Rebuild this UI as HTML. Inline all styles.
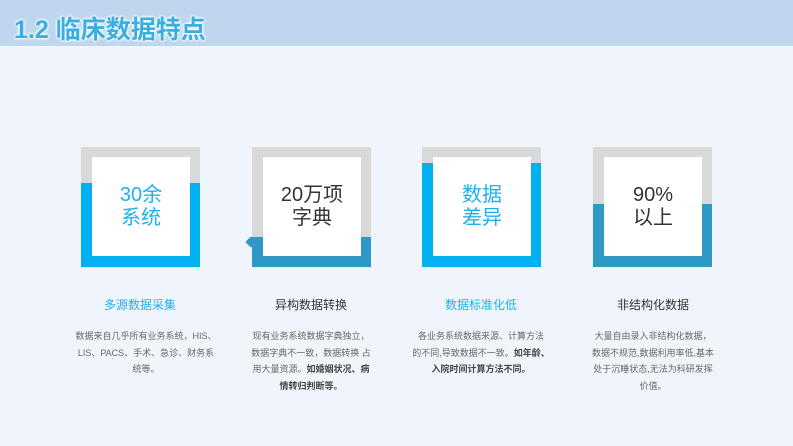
<!DOCTYPE html>
<html><head><meta charset="utf-8"><style>
*{margin:0;padding:0;box-sizing:border-box}
body{width:793px;height:446px;background:#f0f5fc;font-family:"Liberation Sans","Noto Sans CJK SC",sans-serif;position:relative;overflow:hidden}
.hdr{position:absolute;left:0;top:0;width:793px;height:46px;background:#bed7ee}
.ttl{position:absolute;left:14px;top:10px;font-size:25px;font-weight:bold;color:#3aaee0;letter-spacing:0px;text-shadow:0 0 3px #fff,0 0 3px #fff,0 0 2px #fff}
.card{position:absolute;top:147px;width:119px;height:120px;background:#d9d9d9;overflow:hidden}
.card .b{position:absolute;left:0;right:0;bottom:0}
.card .w{position:absolute;left:11px;top:10px;width:98px;height:99px;background:#fff;display:flex;align-items:center;justify-content:center;text-align:center;font-size:20px;line-height:23px}
.t{position:absolute;top:296px;width:160px;text-align:center;font-size:12px}
.d{position:absolute;top:328px;width:160px;text-align:center;font-size:9px;line-height:16.7px;color:#666;white-space:nowrap}
.d b{color:#444}
</style></head><body>
<div class="hdr"></div>
<div class="ttl">1.2 临床数据特点</div>

<div class="card" style="left:81px"><div class="b" style="top:36px;background:#00b0f0"></div><div class="w" style="color:#1fb0ee">30余<br>系统</div></div>
<div class="card" style="left:252px"><div class="b" style="top:90px;background:#2e99c4"></div><div class="w" style="color:#333">20万项<br>字典</div></div>
<div style="position:absolute;left:247px;top:238px;width:8px;height:8px;background:#2e99c4;transform:rotate(45deg)"></div>
<div class="card" style="left:422px"><div class="b" style="top:16px;background:#00b0f0"></div><div class="w" style="color:#1fb0ee">数据<br>差异</div></div>
<div class="card" style="left:593px"><div class="b" style="top:57px;background:#2e99c4"></div><div class="w" style="color:#333">90%<br>以上</div></div>

<div class="t" style="left:60px;color:#1fb0ee">多源数据采集</div>
<div class="t" style="left:231px;color:#333">异构数据转换</div>
<div class="t" style="left:401px;color:#1fb0ee">数据标准化低</div>
<div class="t" style="left:573px;color:#333">非结构化数据</div>

<div class="d" style="left:66px">数据来自几乎所有业务系统，HIS、<br>LIS、PACS、手术、急诊、财务系<br>统等。</div>
<div class="d" style="left:231px">现有业务系统数据字典独立，<br>数据字典不一致，数据转换 占<br>用大量资源。<b>如婚姻状况、病<br>情转归判断等。</b></div>
<div class="d" style="left:401px">各业务系统数据来源、计算方法<br>的不同,导致数据不一致。<b>如年龄、<br>入院时间计算方法不同。</b></div>
<div class="d" style="left:573px">大量自由录入非结构化数据，<br>数据不规范,数据利用率低,基本<br>处于沉睡状态,无法为科研发挥<br>价值。</div>
</body></html>
